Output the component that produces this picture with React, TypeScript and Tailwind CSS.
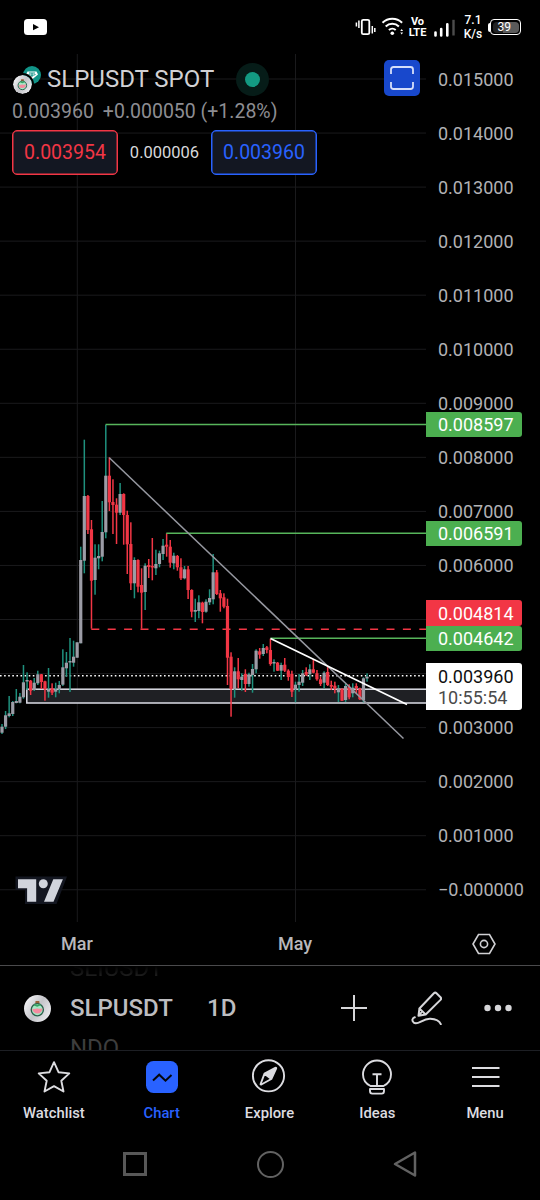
import React from "react";

const TOP = 54;
const STEP = 54.05;

// Each candle: direction, high, low, body top, body bottom (page y)
type Candle = [number, number, number, number, number];
const candles: Candle[] = [
  [1, 724, 734, 726.7, 732.7], [1, 711, 729, 715.3, 726.7], [1, 696, 717.3, 713.3, 716], [1, 701, 716, 702, 714],
  [1, 689, 703.3, 701, 703], [1, 693, 703.3, 696.7, 702.7], [1, 665, 698.7, 682.3, 697.3], [1, 672.3, 690, 680, 681.5],
  [0, 680, 695, 680.7, 690.7], [1, 678, 691, 682.7, 690], [1, 670.7, 685, 674.3, 683.3], [0, 674, 689, 674.3, 682],
  [0, 680.7, 700.7, 681.3, 689.3], [1, 668, 697.7, 689.3, 691.7], [0, 683.3, 695, 688.3, 692.7], [1, 682.7, 697.3, 689.3, 691.7],
  [1, 681, 693.3, 685, 689.3], [1, 649.3, 686, 667.3, 684.7], [1, 652, 676.7, 662.7, 668.3], [1, 638, 692, 661, 662.5],
  [1, 640.7, 666.7, 656.7, 662.7], [1, 642.3, 657.7, 642.3, 657.7], [1, 546.7, 643.3, 560, 643.3], [1, 439.7, 573.3, 496, 560.7],
  [0, 495, 534, 496, 530], [0, 520, 628.7, 529.3, 580.7], [1, 544.3, 594.7, 557.7, 580], [1, 544.3, 569.3, 556, 558.3],
  [1, 501, 561.3, 532, 556.7], [1, 424.7, 538.3, 475.7, 532.3], [0, 457.3, 511, 475.7, 502.3], [0, 479.3, 534, 502, 505],
  [0, 498.3, 544, 504.7, 512.7], [1, 483, 515, 494, 512.7], [0, 493.3, 544.7, 494, 515], [0, 510.7, 574, 515, 544.3],
  [0, 522.3, 590, 544, 583.3], [1, 557.3, 598.3, 560, 583.3], [0, 559.3, 592.3, 560, 586.7], [0, 568.3, 628.7, 585, 592.7],
  [1, 563.3, 610, 565.7, 592], [0, 559, 578, 565, 567], [0, 538, 580.3, 566, 567.5], [1, 549.7, 575, 564, 568.3],
  [1, 550.7, 567.3, 553.3, 564], [1, 539, 560, 545.7, 554], [0, 533.3, 556.7, 544.7, 546.7], [0, 540, 567.7, 546.7, 562.7],
  [1, 552.7, 569.3, 555.7, 563.3], [0, 555, 570.7, 556, 567.3], [0, 558.3, 580, 567.3, 578.3], [1, 566, 579.3, 569.3, 578.3],
  [0, 566, 599, 569.3, 590], [0, 589.3, 617.3, 590, 611.7], [1, 598.7, 622, 610, 611.7], [1, 595.3, 618.3, 602.3, 611],
  [0, 601.7, 623.3, 602.7, 612], [1, 599.3, 612.7, 601.7, 611.7], [1, 589.3, 605, 598, 602.3], [1, 554, 604.3, 572.3, 599.3],
  [0, 570, 595, 572.3, 594], [0, 590, 611.7, 593.3, 598.3], [0, 593.3, 608.3, 597.3, 606.7], [0, 598.7, 685, 606, 657.7],
  [0, 652.3, 716.7, 656.7, 689], [1, 667.3, 697.7, 671.3, 689.3], [0, 658, 688.3, 671.3, 679.3], [1, 673.3, 690.7, 676.7, 680],
  [0, 669.3, 692, 674, 684], [1, 672.7, 686.7, 674.3, 684], [1, 664, 692.7, 669, 675], [1, 649.3, 673.3, 650.7, 669.3],
  [0, 648, 658.7, 651.3, 654.7], [1, 644, 656, 648, 654], [0, 646, 653.3, 647.3, 650], [0, 638.7, 665.7, 650, 664],
  [1, 659.3, 671.7, 662, 663.5], [0, 662, 671, 662.7, 670.7], [1, 662.7, 680, 665, 670.7], [0, 658, 672, 664.7, 670.7],
  [0, 669.3, 680.7, 670.7, 677], [0, 670.7, 697, 674, 691.7], [1, 681.7, 702.3, 684.7, 689.3], [1, 674, 691.7, 681.7, 685],
  [1, 670, 686, 673.3, 682.7], [0, 667.3, 676, 672, 674.7], [1, 664.3, 680, 669.3, 674.3], [0, 659, 673.3, 669.3, 672.7],
  [0, 670, 680.7, 673.3, 679.3], [0, 676.7, 686, 679.3, 684], [1, 671.3, 688.3, 672.7, 682.7], [0, 666, 686, 672, 685],
  [0, 680.7, 690, 685, 686.7], [0, 681.7, 693.3, 685.7, 688.7], [1, 685, 702, 688.3, 692.3], [0, 688.3, 701, 688.7, 700.7],
  [1, 684, 702, 686, 700], [0, 684.3, 699.3, 686.7, 697.3], [1, 683.3, 697.3, 687.7, 693.3], [0, 683.3, 693, 686, 688],
  [0, 687.7, 700, 688.7, 699.3], [1, 677.3, 702.3, 678.3, 700], [1, 673.3, 681.7, 676.7, 678.5],
];

const prices = [
  "0.015000", "0.014000", "0.013000", "0.012000", "0.011000", "0.010000", "0.009000", "0.008000",
  "0.007000", "0.006000", "", "", "0.003000", "0.002000", "0.001000", "−0.000000",
];

function ChartCanvas() {
  return (
    <svg className="block h-[868px] w-[426px]" viewBox="0 54 426 868" fill="none">
      <g stroke="#1a1a1c" strokeWidth="1">
        {prices.map((_, i) => (
          <line key={i} x1="0" x2="426" y1={79 + i * STEP} y2={79 + i * STEP} />
        ))}
        <line x1="77.3" x2="77.3" y1={TOP} y2="922" />
        <line x1="295.5" x2="295.5" y1={TOP} y2="922" />
      </g>
      <rect x="26.8" y="689.2" width="405" height="13.8" fill="#1f2024" stroke="#dcdde6" strokeWidth="1.5" />
      <line x1="0" x2="426" y1="675.8" y2="675.8" stroke="#fff" strokeWidth="1.6" strokeDasharray="1.6 2.5" />
      {candles.map(([up, hi, lo, a, b], i) => {
        const x = 2 + i * 3.579;
        return (
          <g key={i}>
            <rect x={x - 0.75} y={hi} width="1.5" height={lo - hi} fill={up ? "#1f917e" : "#f23645"} />
            <rect x={x - 1.6} y={a} width="3.2" height={b - a} fill={up ? "#9c9ca6" : "#f23645"} />
          </g>
        );
      })}
      <g stroke="#57b55b" strokeWidth="1.5">
        <line x1="105.6" x2="426" y1="424.6" y2="424.6" />
        <line x1="166.3" x2="426" y1="533.3" y2="533.3" />
        <line x1="270.5" x2="426" y1="638.3" y2="638.3" />
      </g>
      <line x1="91.3" x2="426" y1="629.2" y2="629.2" stroke="#f23645" strokeWidth="1.5" strokeDasharray="8 8.4" />
      <line x1="109.3" y1="457.8" x2="403.5" y2="738.5" stroke="#9698a0" strokeWidth="1.5" />
      <line x1="270.5" y1="638.5" x2="407" y2="704.5" stroke="#fff" strokeWidth="1.7" />
      <path d="M15.500 876.500h51.500l-10.500 27.500H25V890h-9.500z" fill="#131620" />
      <path d="M18 879.2h18.2v22.6h-9.1v-13.600H18zM53.3 879.2h9.600l-9.400 22.600H44z" fill="#d1d4dc" />
      <circle cx="43.3" cy="883.7" r="4.5" fill="#d1d4dc" />
    </svg>
  );
}

function Tag({ place, tone, children }: { place: string; tone: string; children: React.ReactNode }) {
  return (
    <div className={`absolute left-0 w-24 rounded-r-[3px] pl-3 text-[18px] ${place} ${tone}`}>{children}</div>
  );
}

function PriceAxis() {
  return (
    <div className="relative h-[868px] w-[114px] text-[18px] text-[#b2b2b5]">
      <div className="-mt-0.5 flex flex-col">
        {prices.map((p, i) => (
          <div key={i} className="flex h-[54.05px] items-center pl-3">{p}</div>
        ))}
      </div>
      <Tag place="top-[358px] h-[25px] leading-[26px]" tone="bg-[#4caf50] text-white">0.008597</Tag>
      <Tag place="top-[467px] h-[25px] leading-[26px]" tone="bg-[#4caf50] text-white">0.006591</Tag>
      <Tag place="top-[546px] h-[26px] leading-[27px]" tone="bg-[#f23645] text-white">0.004814</Tag>
      <Tag place="top-[572px] h-[25px] leading-[26px]" tone="bg-[#4caf50] text-white">0.004642</Tag>
      <Tag place="top-[609px] h-[47px] pt-[3px] leading-[21px]" tone="bg-white text-[#0f0f0f]">
        <div>0.003960</div>
        <div className="text-[#4a4a4a]">10:55:54</div>
      </Tag>
    </div>
  );
}

function Potion({ className }: { className: string }) {
  return (
    <svg className={className} viewBox="0 0 28 28">
      <defs>
        <linearGradient id="coin" x1="0" y1="0.2" x2="1" y2="0.8">
          <stop offset="0" stopColor="#f6f6f8" />
          <stop offset="0.5" stopColor="#c4c4c9" />
          <stop offset="1" stopColor="#efeff2" />
        </linearGradient>
      </defs>
      <circle cx="14" cy="14" r="14" fill="url(#coin)" />
      <path d="M12 6.2h3.800l.3 2.600-2.200 1.400-2.200-1.400z" fill="#9a6238" />
      <circle cx="13.8" cy="15.3" r="6.300" fill="#a5e8c4" stroke="#2c5e4b" strokeWidth="1.400" />
      <path d="M8.600 14.300c2 1 3.500-.6 5.400-.3 1.600.3 2.900.6 5-.2a5.200 5.200 0 0 1-10.400.5z" fill="#f58ba0" />
      <path d="M10.500 10l3.200 1.200 3.500-1.300" stroke="#36a565" strokeWidth="1.700" fill="none" />
    </svg>
  );
}

function StatusBar() {
  return (
    <header className="flex h-[54px] items-center pl-6">
      <svg className="h-4 w-[23px]" viewBox="0 0 23 16">
        <rect width="23" height="16" rx="3.500" fill="#fff" />
        <path d="M9 5l6 3.200L9 11.200z" fill="#000" />
      </svg>
      <svg className="ml-[308px] h-7 w-[51px]" viewBox="355 13 51 28" fill="none" stroke="#fff">
        <rect x="361.800" y="19.800" width="7.500" height="14.400" rx="1.500" strokeWidth="1.800" />
        <path d="M356.400 22.500v4M358.900 20.500v7.500M372.300 26v7.500M374.800 28v4" strokeWidth="1.500" />
        <path d="M382.500 22.800a14 14 0 0 1 19.600 0M385.700 26.500a9.500 9.500 0 0 1 13.200 0M388.900 30a5 5 0 0 1 6.800 0" strokeWidth="2" />
        <circle cx="392.300" cy="33.200" r="1.800" fill="#fff" stroke="none" />
        <path d="M401.700 29l1.400 2h-2.800zM401.700 34.500l1.400-2h-2.800z" fill="#fff" stroke="none" />
      </svg>
      <div className="ml-[1.500px] flex w-5 flex-col items-center font-bold leading-[11px] text-white">
        <span className="text-[11px]">Vo</span>
        <span className="text-[11px]">LTE</span>
      </div>
      <svg className="ml-[4.500px] h-7 w-[24px]" viewBox="431 13 24 28" fill="none" stroke="#fff">
        <path d="M434.500 32.500v3M440.200 29v6.500M446.300 24.300v11.200" strokeWidth="2.600" strokeLinecap="round" />
        <path d="M452.500 19.800v15.700" stroke="#4c4c4c" strokeWidth="2.400" />
      </svg>
      <div className="ml-[7px] flex w-5 flex-col items-center text-[12px] font-medium leading-[14px] text-white">
        <span>7.1</span>
        <span>K/s</span>
      </div>
      <div className="ml-[5px] h-[9px] w-0.5 rounded-l bg-white" />
      <div className="flex h-4 w-[31px] items-center rounded-[4px] border-[1.500px] border-white pl-[1.500px]">
        <div className="flex h-[11px] w-[26px] items-center rounded-sm bg-[linear-gradient(90deg,#222_0,#222_40%,#5a5a5a_40%)] pl-[5px] text-[12px] leading-none text-white">39</div>
      </div>
    </header>
  );
}

function Legend() {
  return (
    <div className="absolute left-3 top-[9px] w-[416px]">
      <div className="flex h-8 items-center">
        <div className="relative h-7 w-[30px]">
          <svg className="absolute left-[11px] top-px h-[18px] w-[18px]" viewBox="0 0 18 18">
            <circle cx="9" cy="9" r="9" fill="#119488" />
            <path d="M4.500 5.500h9L15 8.500 9 13.500 3 8.500z" fill="#fff" />
            <path d="M6 7h6M9 7v4M5.500 8.500c2 1 5 1 7 0" stroke="#119488" fill="none" />
          </svg>
          <Potion className="absolute left-[1px] top-[10px] h-[19px] w-[19px] rounded-full ring-2 ring-black" />
        </div>
        <h1 className="ml-[5px] whitespace-nowrap text-[24px] leading-8 text-[#d1d1d4]">SLPUSDT SPOT</h1>
        <div className="ml-[22px] flex size-[33px] items-center justify-center rounded-full bg-[#061c18]">
          <div className="size-[15px] rounded-full bg-[#139a82]" />
        </div>
        <div className="ml-auto mr-2 mt-[-3px] flex size-9 items-center justify-center rounded-[5px] bg-[#1848cc]">
          <svg className="size-6" viewBox="0 0 24 24" fill="none" stroke="#d5defa" strokeWidth="1.800">
            <path d="M1 8V3.500Q1 1 3.500 1h17Q23 1 23 3.500V8M1 16v4.500Q1 23 3.500 23h17q2.500 0 2.500-2.500V16" />
          </svg>
        </div>
      </div>
      <div className="mt-[5px] flex h-6 items-center gap-[9px] text-[19.500px] text-[#8d8d92]">
        <span>0.003960</span>
        <span>+0.000050 (+1.28%)</span>
      </div>
      <div className="mt-[6px] flex items-center">
        <button className="h-[45px] w-[106px] rounded-[5px] border border-[#f23645] bg-[#131722] text-[19.500px] text-[#f23645] shadow-[inset_0_0_0_0.500px_#f23645]">0.003954</button>
        <span className="w-[93px] pt-0.5 text-center text-[16.500px] text-[#d8d8db]">0.000006</span>
        <button className="h-[45px] w-[106px] rounded-[5px] border border-[#2962ff] bg-[#131722] text-[19.500px] text-[#2962ff] shadow-[inset_0_0_0_0.500px_#2962ff]">0.003960</button>
      </div>
    </div>
  );
}

function TimeAxis() {
  return (
    <div className="flex h-[44px] items-center border-b border-[#4a4a4c] text-[18px] font-medium text-[#b8b8bb]">
      <span className="w-[154px] text-center">Mar</span>
      <span className="ml-[91px] w-[100px] text-center">May</span>
      <svg className="ml-[127px] h-[22px] w-6" viewBox="0 0 24 22" fill="none" stroke="#d0d0d3" strokeWidth="1.600">
        <path d="M6.500 1.500h11L23 11l-5.500 9.500h-11L1 11z" />
        <circle cx="12" cy="11" r="3.600" />
      </svg>
    </div>
  );
}

function SymbolBar() {
  return (
    <div className="flex h-[85px] items-center border-b border-[#1d1f24] pl-6">
      <Potion className="size-[27px]" />
      <div className="ml-[19px] flex h-[84px] w-[137px] flex-col justify-center overflow-hidden text-[24px] leading-[40px]">
        <div className="text-[#424242] [mask-image:linear-gradient(transparent_45%,black)]">SLIUSDT</div>
        <div className="font-medium text-[#bdbdc0]">SLPUSDT</div>
        <div className="text-[#3d3d3d]">NDQ</div>
      </div>
      <span className="text-[24px] font-medium text-[#bdbdc0]">1D</span>
      <svg className="ml-[105px] size-[26px]" viewBox="0 0 26 26" stroke="#d6d6d9" strokeWidth="2">
        <path d="M13 0v26M0 13h26" />
      </svg>
      <svg className="ml-[44px] h-[34px] w-[31px]" viewBox="411 990 31 34" fill="none" stroke="#d6d6d9" strokeWidth="2" strokeLinecap="round" strokeLinejoin="round">
        <path d="M418.500 1014.800l.9-7.300 14.500-15.200q1.300-1.300 2.600 0l4 4q1.200 1.300 0 2.600l-14.800 14.600zM419.400 1007.500l6.200 6M418.500 1014.800l2.500-3" />
        <path d="M414.800 1016.300c-2.800.8-3.200 3.500-1 5.300 4.200 3.200 8.500-4.300 16.500-3.900 5.500.2 9 2 10.500 5.500" />
      </svg>
      <svg className="ml-[42px] h-7 w-7" viewBox="0 0 28 28" fill="#d6d6d9">
        <circle cx="3.500" cy="14" r="3.200" />
        <circle cx="14" cy="14" r="3.200" />
        <circle cx="24.500" cy="14" r="3.200" />
      </svg>
    </div>
  );
}

function Tab({ label, active, children }: { label: string; active?: boolean; children: React.ReactNode }) {
  return (
    <div className={`flex w-[108px] flex-col items-center text-[14.800px] font-medium leading-[18px] ${active ? "text-[#2962ff]" : "text-[#dcdce0]"}`}>
      <svg className="mb-[9px] size-9" viewBox="0 0 36 36" fill="none" stroke="#dcdce0" strokeWidth="1.900">{children}</svg>
      {label}
    </div>
  );
}

function TabBar() {
  return (
    <nav className="flex h-[85px] w-[539px] pt-[8px]">
      <Tab label="Watchlist">
        <path strokeLinejoin="round" d="M18 3.200l4.500 10 10.800 1.200-8 7.300 2.200 10.800L18 27.200l-9.500 5.300 2.200-10.800-8-7.300 10.800-1.200z" />
      </Tab>
      <Tab label="Chart" active>
        <rect x="2" y="2" width="32" height="32" rx="7.500" fill="#2962ff" stroke="none" />
        <path stroke="#05060a" strokeWidth="2" d="M9 21.500l6.200-5.800 6.300 6 6-5.700" />
      </Tab>
      <Tab label="Explore">
        <circle cx="17.500" cy="16.800" r="15.600" />
        <path fill="#dcdce0" stroke="none" d="M25.300 8.500L20.300 20l-6.800-5.300z" />
        <path strokeLinejoin="round" d="M13.500 14.700l10.800-5.800q1.300-.5.800.8L20.300 20l-10 5.500q-1 .3-.6-.8zM13.500 14.700l6.800 5.300" />
      </Tab>
      <Tab label="Ideas">
        <path d="M11.500 27q-7.500-3.800-7.500-11.500a14 14 0 0 1 28 0q0 7.700-7.500 11.500zM13.500 15.200h9M18 15.200V27" />
        <path strokeLinejoin="round" d="M11 30h14v2q0 2.600-2.300 2.600h-9.400q-2.300 0-2.300-2.600z" />
      </Tab>
      <Tab label="Menu">
        <path strokeWidth="2.200" d="M5 9h27.500M5 18h27.500M5 27h27.500" />
      </Tab>
    </nav>
  );
}

export default function App() {
  return (
    <main className="h-[1200px] w-[540px] overflow-hidden bg-black font-['Roboto',sans-serif]">
      <StatusBar />
      <section className="relative flex h-[868px]">
        <ChartCanvas />
        <PriceAxis />
        <Legend />
      </section>
      <TimeAxis />
      <SymbolBar />
      <TabBar />
      <footer className="flex h-14 items-center pl-[123px]">
        <div className="size-6 border-[3px] border-[#585858]" />
        <div className="ml-[110px] size-[27px] rounded-full border-[2.500px] border-[#626262]" />
        <svg className="ml-[109px] h-7 w-6" viewBox="0 0 24 28" fill="none" stroke="#626262" strokeWidth="2.500">
          <path d="M22 2.500v23L2 14z" strokeLinejoin="round" />
        </svg>
      </footer>
    </main>
  );
}
